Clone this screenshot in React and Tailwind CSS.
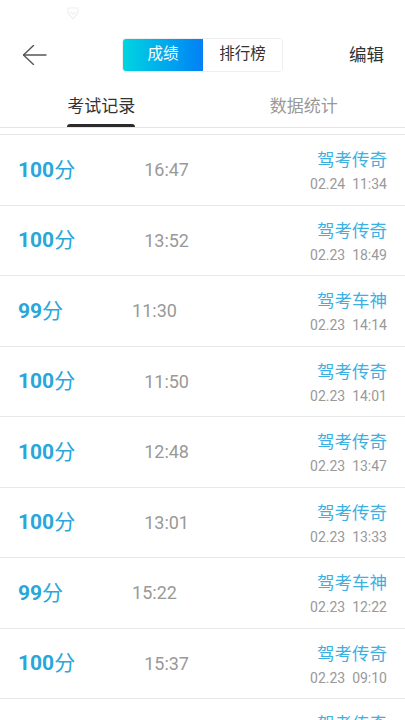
import React from "react";

const rows = [
  { score: "100", time: "16:47", name: "驾考传奇", date: "02.24  11:34" },
  { score: "100", time: "13:52", name: "驾考传奇", date: "02.23  18:49" },
  { score: "99", time: "11:30", name: "驾考车神", date: "02.23  14:14" },
  { score: "100", time: "11:50", name: "驾考传奇", date: "02.23  14:01" },
  { score: "100", time: "12:48", name: "驾考传奇", date: "02.23  13:47" },
  { score: "100", time: "13:01", name: "驾考传奇", date: "02.23  13:33" },
  { score: "99", time: "15:22", name: "驾考车神", date: "02.23  12:22" },
  { score: "100", time: "15:37", name: "驾考传奇", date: "02.23  09:10" },
  { score: "100", time: "14:05", name: "驾考传奇", date: "02.23  08:51" },
];

export default function App() {
  return (
    <div
      className="w-[405px] h-[720px] overflow-hidden bg-white"
      style={{ fontFamily: 'Roboto, "Noto Sans CJK SC", sans-serif' }}
    >
      {/* status area */}
      <div className="h-[38px] pl-[65px] pt-[5px]">
        <svg width="16" height="16" viewBox="0 0 16 16" fill="none" stroke="#f0f0f0" strokeWidth="1.2">
          <path d="M3 3h10v5l-5 6-5-6z" />
          <path d="M5 7l3 2 3-2" />
        </svg>
      </div>
      {/* nav */}
      <div className="h-[34px] flex items-center relative">
        <div className="pl-[23px] flex items-center">
          <svg width="24" height="20" viewBox="0 0 24 20" fill="none" stroke="#555" strokeWidth="1.4" strokeLinecap="round" strokeLinejoin="round">
            <path d="M0.5 10L10.5 0.5" />
            <path d="M0.5 10L10.5 19.5" />
            <path d="M0.5 10H23" />
          </svg>
        </div>
        <div className="absolute left-[122px] top-0 h-[34px] w-[161px] flex rounded-[4px] overflow-hidden border border-[#eeeeee]">
          <div className="w-[80px] h-full flex items-center justify-center bg-gradient-to-r from-[#00d4e0] to-[#0a7ff5] text-white text-[15.5px]">
            成绩
          </div>
          <div className="flex-1 h-full flex items-center justify-center bg-white text-[#333] text-[15.5px]">
            排行榜
          </div>
        </div>
        <div className="ml-auto pr-[21px] text-[17.5px] text-[#333]">编辑</div>
      </div>
      {/* tabs */}
      <div className="h-[56px] flex border-b border-[#e6e6e6]">
        <div className="flex-1 flex flex-col items-center justify-end">
          <div className="text-[17px] leading-[22px] text-[#333]">考试记录</div>
          <div className="mt-[7px] w-[68px] h-[3px] rounded-t-[3px] bg-[#2b2b2b]"></div>
        </div>
        <div className="flex-1 flex flex-col items-center justify-end">
          <div className="text-[17px] leading-[22px] text-[#999]">数据统计</div>
          <div className="mt-[7px] w-[68px] h-[3px]"></div>
        </div>
      </div>
      {/* list */}
      <div className="mt-[6px] border-t border-[#e8e8e8]">
        {rows.map((r, i) => (
          <div key={i} className="h-[70.5px] flex items-center border-b border-[#e8e8e8] pl-[18px] pr-[18px]">
            <div className="text-[#29a6da] leading-[28px] flex items-baseline">
              <span className="text-[21px] font-bold">{r.score}</span>
              <span className="text-[21px]">分</span>
            </div>
            <div className="ml-[69px] text-[18px] text-[#999]">{r.time}</div>
            <div className="ml-auto flex flex-col items-end pt-[3px]">
              <div className="text-[17.5px] leading-[24px] text-[#3db0e2]">{r.name}</div>
              <div className="mt-[2px] text-[14px] leading-[20px] text-[#999] whitespace-pre">{r.date}</div>
            </div>
          </div>
        ))}
      </div>
    </div>
  );
}
